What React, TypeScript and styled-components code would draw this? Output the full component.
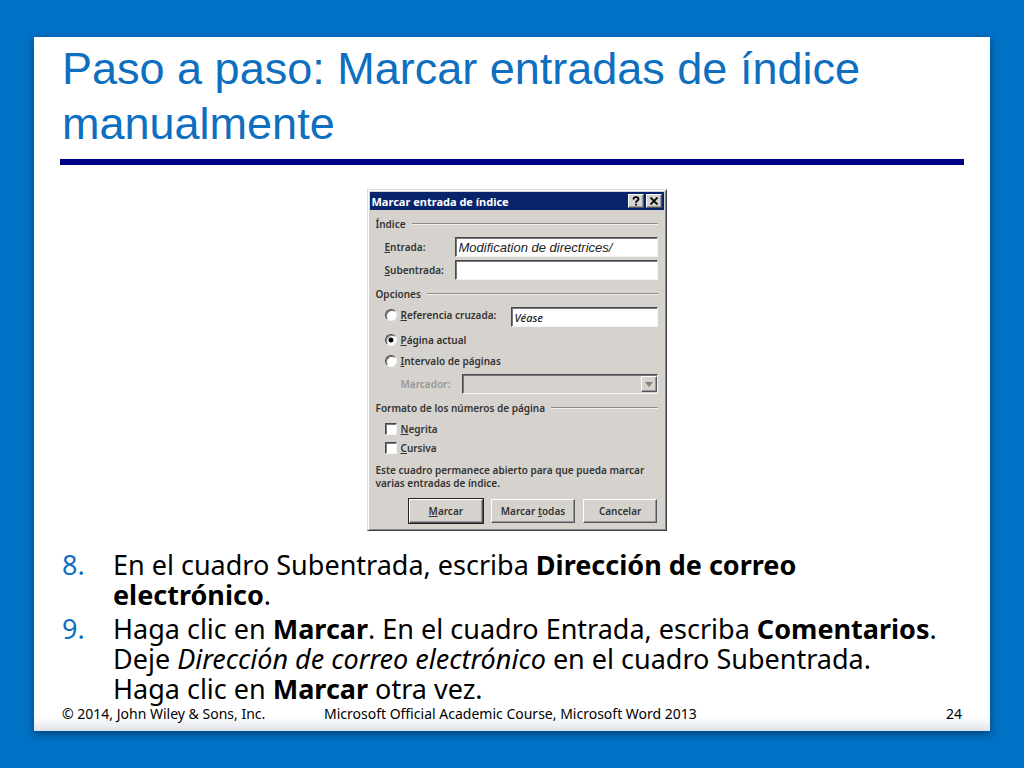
import React from "react";
import styled, { createGlobalStyle } from "styled-components";

const GlobalStyle = createGlobalStyle`
  *, *::before, *::after { box-sizing: border-box; }
  body {
    margin: 0;
    background: #0072c6;
    font-family: "Noto Sans", "Open Sans", sans-serif;
    color: #000;
  }
`;

const Page = styled.div`
  min-height: 100vh;
  padding: 37px 34px;
  display: flex;
  background: #0072c6;
`;

const Slide = styled.main`
  flex: 1;
  min-width: 0;
  display: flex;
  flex-direction: column;
  padding: 4px 26px 8px;
  background: linear-gradient(to top, #dfe3e9 0, #fff 14px);
  box-shadow: 0 3px 8px rgba(0, 30, 70, 0.6);
`;

const Title = styled.h1`
  margin: 0;
  padding: 0 2px 8px;
  border-bottom: 6px solid #000086;
  color: #0e6fc0;
  font: 400 45px/55px "Liberation Sans", Arial, sans-serif;
`;

const Dialog = styled.form`
  align-self: center;
  width: 300px;
  margin: 24px 0 0 9px;
  padding: 2px 2px 7px;
  background: #d6d3ce;
  border: 1px solid;
  border-color: #d6dbe6 #404044 #404044 #d6dbe6;
  box-shadow: inset 1px 1px 0 #fff, inset -1px -1px 0 #85858a;
  font-size: 10px;
  font-weight: 600;
  line-height: 13px;
  color: #333;
`;

const TitleBar = styled.header`
  height: 18px;
  padding: 0 2px;
  display: flex;
  align-items: center;
  gap: 2px;
  background: #08246b;
  color: #fff;
`;

const DialogName = styled.h2`
  flex: 1;
  margin: 0;
  font-size: 11px;
  font-weight: 700;
`;

const raised = `
  background: #d6d3ce;
  border: 1px solid;
  border-color: #fff #55555a #55555a #fff;
  box-shadow: inset -1px -1px 0 #98969a;
`;

const sunken = `
  border: 1px solid;
  border-color: #48484c #f4f3f0 #f4f3f0 #48484c;
  box-shadow: inset 1px 1px 0 #77777a;
`;

const BarButton = styled.button`
  ${raised}
  width: 16px;
  height: 14px;
  padding: 0;
  display: grid;
  place-items: center;
  color: #000;
`;

const Content = styled.div`
  padding: 6px 6px 0;
`;

const Group = styled.fieldset`
  margin: 0;
  padding: 0 0 6px;
  border: 0;
  min-width: 0;
`;

const Legend = styled.legend`
  width: 100%;
  height: 16px;
  padding: 0;
  margin-bottom: 5px;
  display: flex;
  align-items: center;
  gap: 6px;
  &::after {
    content: "";
    flex: 1;
    height: 2px;
    border-top: 1px solid #8e8c8a;
    border-bottom: 1px solid #f2f1ee;
  }
`;

const Rows = styled.div<{ $gap: number }>`
  display: flex;
  flex-direction: column;
  gap: ${(p) => p.$gap}px;
  padding-left: 9px;
`;

const Field = styled.div<{ $label: number; $indent?: number; $dim?: boolean }>`
  display: grid;
  grid-template-columns: ${(p) => p.$label}px 1fr;
  align-items: center;
  height: 20px;
  padding-left: ${(p) => p.$indent ?? 0}px;
  color: ${(p) => (p.$dim ? "#989693" : "inherit")};
`;

const TextBox = styled.input<{ $arial?: boolean }>`
  ${sunken}
  width: 100%;
  height: 20px;
  padding: 0 3px;
  border-radius: 0;
  background: #fff;
  color: #222;
  font: ${(p) =>
    p.$arial
      ? 'italic 400 13px "Liberation Sans", Arial, sans-serif'
      : 'italic 500 11px "Noto Sans", sans-serif'};
`;

const Choice = styled.label`
  display: flex;
  align-items: center;
  align-self: start;
  gap: 4px;
  height: 16px;
`;

const Radio = styled.input`
  ${sunken}
  appearance: none;
  width: 12px;
  height: 12px;
  margin: 0;
  border-radius: 50%;
  background: #fff;
  &:checked {
    background: radial-gradient(circle, #000 2px, #fff 3px);
  }
`;

const Check = styled.input`
  ${sunken}
  appearance: none;
  width: 12px;
  height: 12px;
  margin: 0;
  background: #fff;
`;

const SelectWrap = styled.div`
  ${sunken}
  display: flex;
  height: 20px;
  padding: 1px;
  position: relative;
`;

const Select = styled.select`
  appearance: none;
  width: 100%;
  border: 0;
  background: transparent;
`;

const Arrow = styled.span`
  ${raised}
  position: absolute;
  top: 1px;
  right: 0;
  width: 16px;
  height: 16px;
  display: grid;
  place-items: center;
  pointer-events: none;
`;

const Note = styled.p`
  margin: 2px 0 9px;
`;

const Actions = styled.div`
  display: grid;
  grid-template-columns: 75fr 84fr 75fr;
  gap: 8px;
  padding-left: 33px;
`;

const Action = styled.button<{ $primary?: boolean }>`
  ${raised}
  height: 24px;
  padding: 0;
  color: #333;
  font: 600 10px/13px "Noto Sans", sans-serif;
  outline: ${(p) => (p.$primary ? "1px solid #222" : "none")};
`;

const Steps = styled.ol`
  list-style: none;
  margin: 19px 0 0;
  padding: 0 22px 0 2px;
  font-size: 27px;
  line-height: 30px;
`;

const Step = styled.li`
  display: grid;
  grid-template-columns: 51px 1fr;
  & + & {
    margin-top: 4px;
  }
`;

const StepNumber = styled.span`
  color: #0e6fc0;
`;

const Footer = styled.footer`
  display: grid;
  grid-template-columns: 262px 1fr auto;
  margin-top: auto;
  padding: 0 2px;
  font-size: 14px;
  line-height: 18px;
`;

export default function App() {
  return (
    <Page>
      <GlobalStyle />
      <Slide>
        <Title>Paso a paso: Marcar entradas de índice manualmente</Title>

        <Dialog onSubmit={(e) => e.preventDefault()}>
          <TitleBar>
            <DialogName>Marcar entrada de índice</DialogName>
            <BarButton type="button" aria-label="Ayuda">
              <svg width="8" height="10" viewBox="0 0 8 10" fill="none" stroke="currentColor" strokeWidth="1.8">
                <path d="M1.5 3.5Q1.5 1.2 4 1.2T6.5 3Q6.5 4 5.2 4.8T4 6.8M4 7.8v1.8" />
              </svg>
            </BarButton>
            <BarButton type="button" aria-label="Cerrar">
              <svg width="8" height="8" viewBox="0 0 8 8" stroke="currentColor" strokeWidth="1.8">
                <path d="M.5 .5 7.5 7.5M7.5 .5 .5 7.5" />
              </svg>
            </BarButton>
          </TitleBar>

          <Content>
            <Group>
              <Legend>Índice</Legend>
              <Rows $gap={3}>
                <Field $label={70}>
                  <label htmlFor="entry"><u>E</u>ntrada:</label>
                  <TextBox id="entry" $arial defaultValue="Modification de directrices/" />
                </Field>
                <Field $label={70}>
                  <label htmlFor="subentry"><u>S</u>ubentrada:</label>
                  <TextBox id="subentry" />
                </Field>
              </Rows>
            </Group>

            <Group>
              <Legend>Opciones</Legend>
              <Rows $gap={5}>
                <Field $label={126}>
                  <Choice>
                    <Radio type="radio" name="option" />
                    <span><u>R</u>eferencia cruzada:</span>
                  </Choice>
                  <TextBox aria-label="Referencia cruzada" defaultValue="Véase" />
                </Field>
                <Choice>
                  <Radio type="radio" name="option" defaultChecked />
                  <span><u>P</u>ágina actual</span>
                </Choice>
                <Choice>
                  <Radio type="radio" name="option" />
                  <span><u>I</u>ntervalo de páginas</span>
                </Choice>
                <Field $label={61} $indent={16} $dim>
                  <label htmlFor="bookmark">Marcador:</label>
                  <SelectWrap>
                    <Select id="bookmark" disabled />
                    <Arrow>
                      <svg width="8" height="5" viewBox="0 0 8 5" fill="#85837f">
                        <path d="M0 0h8L4 5z" />
                      </svg>
                    </Arrow>
                  </SelectWrap>
                </Field>
              </Rows>
            </Group>

            <Group>
              <Legend>Formato de los números de página</Legend>
              <Rows $gap={3}>
                <Choice>
                  <Check type="checkbox" />
                  <span><u>N</u>egrita</span>
                </Choice>
                <Choice>
                  <Check type="checkbox" />
                  <span><u>C</u>ursiva</span>
                </Choice>
              </Rows>
            </Group>

            <Note>Este cuadro permanece abierto para que pueda marcar varias entradas de índice.</Note>

            <Actions>
              <Action type="submit" $primary><u>M</u>arcar</Action>
              <Action type="button">Marcar <u>t</u>odas</Action>
              <Action type="button">Cancelar</Action>
            </Actions>
          </Content>
        </Dialog>

        <Steps>
          <Step>
            <StepNumber>8.</StepNumber>
            <span>En el cuadro Subentrada, escriba <b>Dirección de correo electrónico</b>.</span>
          </Step>
          <Step>
            <StepNumber>9.</StepNumber>
            <span>
              Haga clic en <b>Marcar</b>. En el cuadro Entrada, escriba <b>Comentarios</b>. Deje{" "}
              <i>Dirección de correo electrónico</i> en el cuadro Subentrada. Haga clic en <b>Marcar</b> otra vez.
            </span>
          </Step>
        </Steps>

        <Footer>
          <span>© 2014, John Wiley &amp; Sons, Inc.</span>
          <span>Microsoft Official Academic Course, Microsoft Word 2013</span>
          <span>24</span>
        </Footer>
      </Slide>
    </Page>
  );
}
